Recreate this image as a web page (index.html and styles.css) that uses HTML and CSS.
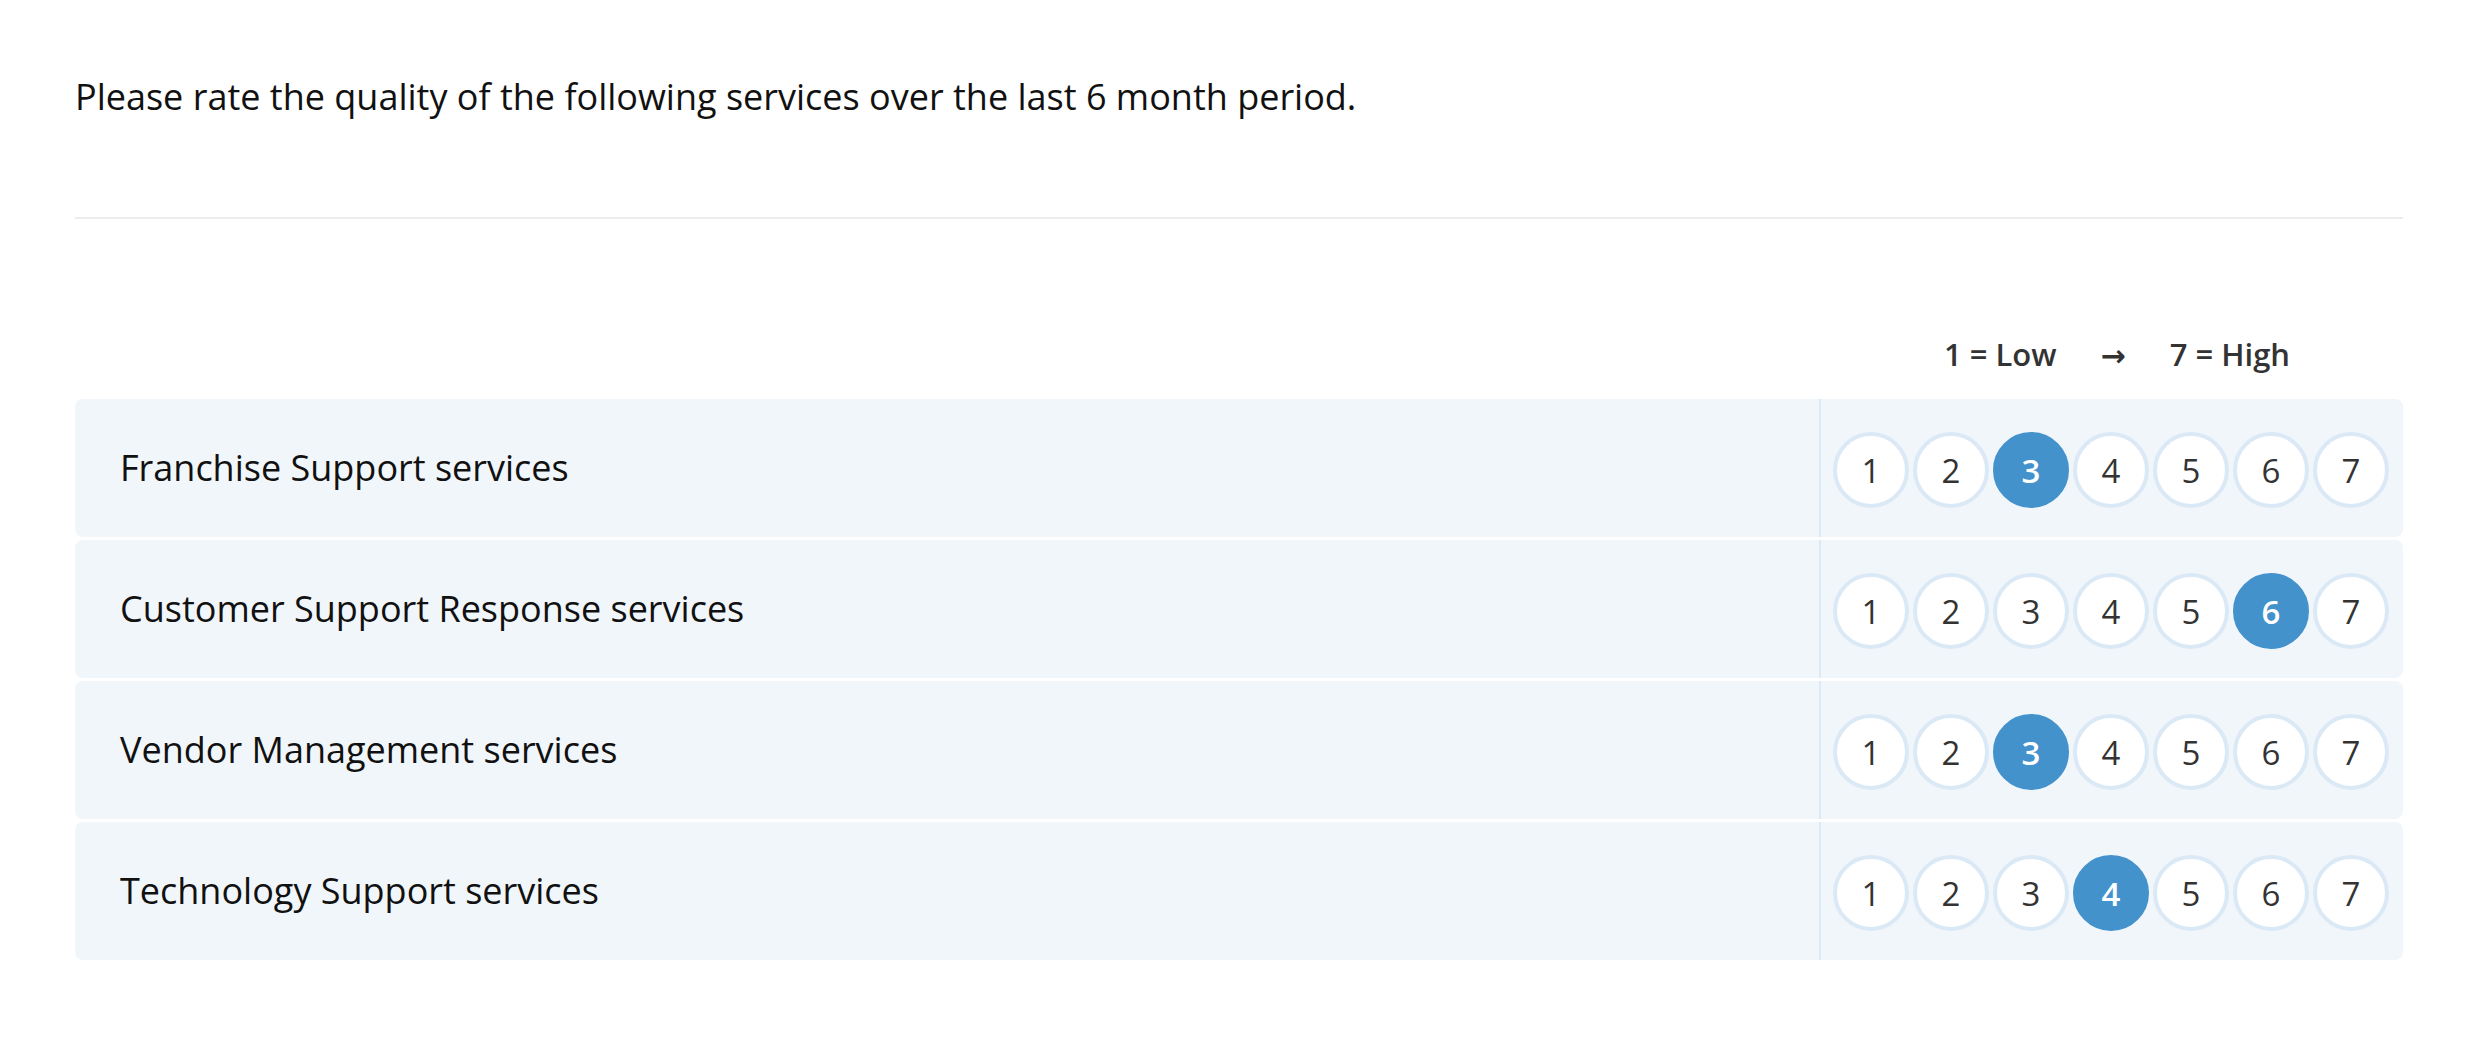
FILE: index.html
```html
<!DOCTYPE html>
<html lang="en">
<head>
<meta charset="utf-8">
<title>Service rating</title>
<link rel="stylesheet" href="styles.css">
</head>
<body>
<div class="page">
  <p class="question">Please rate the quality of the following services over the last 6 month period.</p>
  <div class="divider"></div>
  <div class="legend-row">
    <div></div>
    <div class="legend"><span>1 = Low</span><span class="arrow">→</span><span>7 = High</span></div>
  </div>
  <div class="rows">
    <div class="row">
      <div class="label">Franchise Support services</div>
      <div class="scale">
        <span class="dot">1</span><span class="dot">2</span><span class="dot on">3</span><span class="dot">4</span><span class="dot">5</span><span class="dot">6</span><span class="dot">7</span>
      </div>
    </div>
    <div class="row">
      <div class="label">Customer Support Response services</div>
      <div class="scale">
        <span class="dot">1</span><span class="dot">2</span><span class="dot">3</span><span class="dot">4</span><span class="dot">5</span><span class="dot on">6</span><span class="dot">7</span>
      </div>
    </div>
    <div class="row">
      <div class="label">Vendor Management services</div>
      <div class="scale">
        <span class="dot">1</span><span class="dot">2</span><span class="dot on">3</span><span class="dot">4</span><span class="dot">5</span><span class="dot">6</span><span class="dot">7</span>
      </div>
    </div>
    <div class="row">
      <div class="label">Technology Support services</div>
      <div class="scale">
        <span class="dot">1</span><span class="dot">2</span><span class="dot">3</span><span class="dot on">4</span><span class="dot">5</span><span class="dot">6</span><span class="dot">7</span>
      </div>
    </div>
  </div>
</div>
</body>
</html>
```

FILE: styles.css
```css
html, body {
  margin: 0;
  padding: 0;
  background: #ffffff;
}

body {
  font-family: "Open Sans", "Noto Sans", sans-serif;
  color: #111111;
}

.page {
  padding: 72px 83px 0 75px;
}

.question {
  margin: 0;
  font-size: 36px;
  line-height: 49px;
  color: #111111;
}

.divider {
  margin-top: 96px;
  height: 2px;
  background: #ececec;
}

.legend-row {
  display: grid;
  grid-template-columns: 1fr 584px;
  margin-top: 114px;
  margin-bottom: 24px;
}

.legend {
  display: flex;
  justify-content: center;
  align-items: baseline;
  gap: 44px;
  height: 42px;
  padding-left: 12px;
  font-size: 31px;
  font-weight: 600;
  line-height: 42px;
  color: #333333;
}

.legend .arrow {
  font-family: "DejaVu Sans", sans-serif;
  font-weight: 700;
  font-size: 30px;
  line-height: 1;
}

.rows {
  display: flex;
  flex-direction: column;
  gap: 3px;
}

.row {
  display: grid;
  grid-template-columns: 1fr 584px;
  background: #f1f6fb;
  border-radius: 8px;
}

.label {
  display: flex;
  align-items: center;
  padding-left: 45px;
  padding-bottom: 2px;
  font-size: 36px;
  color: #111111;
}

.scale {
  display: flex;
  gap: 4px;
  padding: 33px 14px 29px 12px;
  border-left: 2px solid #dde9f5;
}

.dot {
  box-sizing: border-box;
  width: 76px;
  height: 76px;
  border-radius: 50%;
  border: 4px solid #dbe9f6;
  background: #ffffff;
  display: flex;
  align-items: center;
  justify-content: center;
  font-size: 33px;
  color: #333333;
}

.dot.on {
  background: #4392cc;
  border-color: #4392cc;
  color: #ffffff;
  font-weight: 600;
}
```
